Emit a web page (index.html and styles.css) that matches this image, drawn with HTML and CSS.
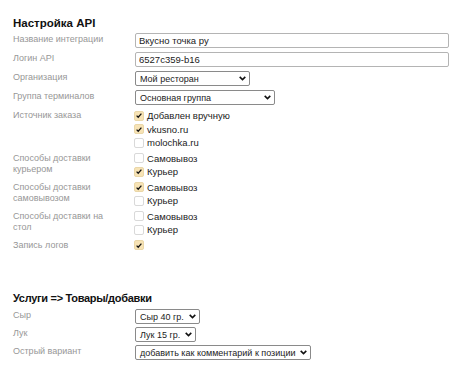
FILE: index.html
```html
<!DOCTYPE html>
<html lang="ru">
<head>
    <meta charset="UTF-8">
    <meta name="viewport" content="width=device-width, initial-scale=1.0">
    <title>Настройка API</title>
    <link rel="stylesheet" href="styles.css">
</head>
<body>
    <div class="page">
        <h2 class="section-title">Настройка API</h2>
        <div class="form">
            <div class="form-row">
                <div class="field-label">Название интеграции</div>
                <div class="field"><input class="text-input" type="text" value="Вкусно точка ру"></div>
            </div>
            <div class="form-row">
                <div class="field-label">Логин API</div>
                <div class="field"><input class="text-input" type="text" value="6527c359-b16"></div>
            </div>
            <div class="form-row">
                <div class="field-label">Организация</div>
                <div class="field">
                    <div class="select w-org"><span>Мой ресторан</span><svg class="chev" viewBox="0 0 10 6"><path d="M1 1l4 4 4-4"/></svg></div>
                </div>
            </div>
            <div class="form-row">
                <div class="field-label">Группа терминалов</div>
                <div class="field">
                    <div class="select w-group"><span>Основная группа</span><svg class="chev" viewBox="0 0 10 6"><path d="M1 1l4 4 4-4"/></svg></div>
                </div>
            </div>

            <div class="form-row checks">
                <div class="field-label">Источник заказа</div>
                <div class="field">
                    <label class="check"><span class="box on"><svg viewBox="0 0 10 10"><path d="M2 5.2l2 2 4-4.6"/></svg></span>Добавлен вручную</label>
                    <label class="check"><span class="box on"><svg viewBox="0 0 10 10"><path d="M2 5.2l2 2 4-4.6"/></svg></span>vkusno.ru</label>
                    <label class="check"><span class="box"></span>molochka.ru</label>
                </div>
            </div>
            <div class="form-row checks">
                <div class="field-label">Способы доставки курьером</div>
                <div class="field">
                    <label class="check"><span class="box"></span>Самовывоз</label>
                    <label class="check"><span class="box on"><svg viewBox="0 0 10 10"><path d="M2 5.2l2 2 4-4.6"/></svg></span>Курьер</label>
                </div>
            </div>
            <div class="form-row checks">
                <div class="field-label">Способы доставки самовывозом</div>
                <div class="field">
                    <label class="check"><span class="box on"><svg viewBox="0 0 10 10"><path d="M2 5.2l2 2 4-4.6"/></svg></span>Самовывоз</label>
                    <label class="check"><span class="box"></span>Курьер</label>
                </div>
            </div>
            <div class="form-row checks">
                <div class="field-label">Способы доставки на стол</div>
                <div class="field">
                    <label class="check"><span class="box"></span>Самовывоз</label>
                    <label class="check"><span class="box"></span>Курьер</label>
                </div>
            </div>
            <div class="form-row checks">
                <div class="field-label">Запись логов</div>
                <div class="field">
                    <label class="check"><span class="box on"><svg viewBox="0 0 10 10"><path d="M2 5.2l2 2 4-4.6"/></svg></span></label>
                </div>
            </div>
        </div>

        <h2 class="section-title second">Услуги =&gt; Товары/добавки</h2>
        <div class="form compact">
            <div class="form-row">
                <div class="field-label">Сыр</div>
                <div class="field">
                    <div class="select"><span>Сыр 40 гр.</span><svg class="chev" viewBox="0 0 10 6"><path d="M1 1l4 4 4-4"/></svg></div>
                </div>
            </div>
            <div class="form-row">
                <div class="field-label">Лук</div>
                <div class="field">
                    <div class="select"><span>Лук 15 гр.</span><svg class="chev" viewBox="0 0 10 6"><path d="M1 1l4 4 4-4"/></svg></div>
                </div>
            </div>
            <div class="form-row">
                <div class="field-label">Острый вариант</div>
                <div class="field">
                    <div class="select"><span>добавить как комментарий к позиции</span><svg class="chev" viewBox="0 0 10 6"><path d="M1 1l4 4 4-4"/></svg></div>
                </div>
            </div>
        </div>
    </div>
</body>
</html>
```

FILE: styles.css
```css
body {
    margin: 0;
    background: #fff;
    font-family: 'Liberation Sans', Arial, sans-serif;
    font-size: 9.5px;
    color: #222;
}
.page {
    padding: 16px 13px 20px 13px;
}
.section-title {
    margin: 0 0 3px 0;
    font-size: 11.5px;
    font-weight: bold;
    color: #111;
    line-height: 14px;
}
.section-title.second {
    margin-top: 39px;
    margin-bottom: 4px;
    font-size: 11px;
    letter-spacing: -0.3px;
}
.form {
    display: flex;
    flex-direction: column;
    gap: 4px;
}
.form-row {
    display: grid;
    grid-template-columns: 122px 1fr;
}
.form.compact {
    gap: 3px;
}
.field-label {
    color: #979797;
    font-size: 9px;
    line-height: 11px;
    padding-top: 1px;
    padding-right: 16px;
}
.field {
    display: flex;
    flex-direction: column;
    align-items: flex-start;
}
.text-input {
    width: 314px;
    height: 15px;
    box-sizing: border-box;
    border: 1px solid #b4b4b4;
    border-radius: 2px;
    padding: 0 3px;
    margin: 0;
    font-family: inherit;
    font-size: 9.5px;
    color: #222;
    outline: none;
}
.select {
    display: flex;
    align-items: center;
    justify-content: space-between;
    gap: 5px;
    height: 15px;
    box-sizing: border-box;
    border: 1px solid #8a8a8a;
    border-radius: 2px;
    padding: 0 3px 0 4px;
    color: #222;
    font-size: 9px;
    white-space: nowrap;
}
.select.w-org {
    width: 115px;
}
.select.w-group {
    width: 140px;
}
.chev {
    width: 7px;
    height: 4.5px;
    flex: none;
}
.chev path {
    fill: none;
    stroke: #111;
    stroke-width: 2.2;
}
.check {
    display: flex;
    align-items: center;
    gap: 3px;
    height: 13.5px;
    color: #222;
}
.form-row.checks + .form-row.checks {
    margin-top: -2px;
}
.box {
    width: 10px;
    height: 10px;
    box-sizing: border-box;
    border: 1px solid #d9d9d9;
    border-radius: 2px;
    background: #fff;
    display: flex;
    align-items: center;
    justify-content: center;
    margin-left: -1px;
}
.box.on {
    background: #f7e3b5;
    border-color: #ead7a8;
}
.box svg {
    width: 9px;
    height: 9px;
}
.box svg path {
    fill: none;
    stroke: #111;
    stroke-width: 1.6;
}
```
